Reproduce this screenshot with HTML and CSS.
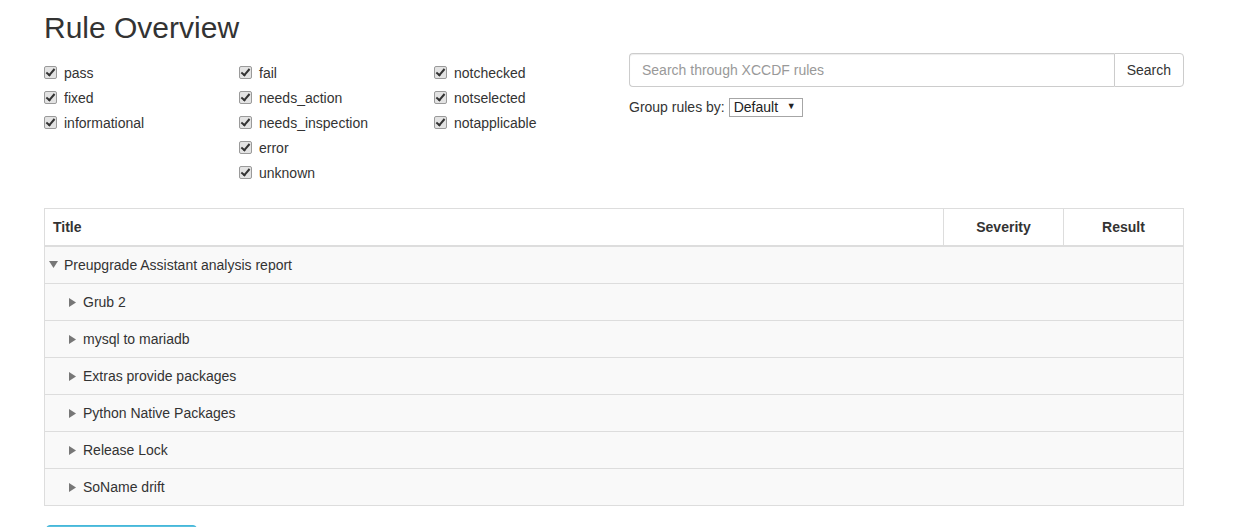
FILE: index.html
```html
<!DOCTYPE html>
<html lang="en">
<head>
    <meta charset="UTF-8">
    <meta name="viewport" content="width=device-width, initial-scale=1.0">
    <title>Rule Overview</title>
    <link rel="stylesheet" href="styles.css">
</head>
<body>
  <div class="container">
    <h2>Rule Overview</h2>

    <div class="filters">
      <div class="result-filter">
        <div class="filter-col">
          <label class="check"><input type="checkbox" checked> pass</label>
          <label class="check"><input type="checkbox" checked> fixed</label>
          <label class="check"><input type="checkbox" checked> informational</label>
        </div>
        <div class="filter-col">
          <label class="check"><input type="checkbox" checked> fail</label>
          <label class="check"><input type="checkbox" checked> needs_action</label>
          <label class="check"><input type="checkbox" checked> needs_inspection</label>
          <label class="check"><input type="checkbox" checked> error</label>
          <label class="check"><input type="checkbox" checked> unknown</label>
        </div>
        <div class="filter-col">
          <label class="check"><input type="checkbox" checked> notchecked</label>
          <label class="check"><input type="checkbox" checked> notselected</label>
          <label class="check"><input type="checkbox" checked> notapplicable</label>
        </div>
      </div>

      <div class="search-section">
        <div class="input-group">
          <input type="text" class="search-input" placeholder="Search through XCCDF rules">
          <button class="search-btn">Search</button>
        </div>
        <div class="group-by">
          Group rules by:
          <span class="select-wrap">
            <select>
              <option>Default</option>
              <option>Severity</option>
              <option>Result</option>
            </select>
          </span>
        </div>
      </div>
    </div>

    <table class="rules">
      <thead>
        <tr>
          <th class="col-title">Title</th>
          <th class="col-small">Severity</th>
          <th class="col-small">Result</th>
        </tr>
      </thead>
      <tbody>
        <tr class="group open">
          <td colspan="3"><span class="toggle"><svg width="9" height="7" viewBox="0 0 9 7"><polygon points="0,0 9,0 4.5,7" fill="#777"/></svg></span>Preupgrade Assistant analysis report</td>
        </tr>
        <tr class="group child">
          <td colspan="3"><span class="toggle"><svg width="7" height="9" viewBox="0 0 7 9"><polygon points="0,0 7,4.5 0,9" fill="#777"/></svg></span>Grub 2</td>
        </tr>
        <tr class="group child">
          <td colspan="3"><span class="toggle"><svg width="7" height="9" viewBox="0 0 7 9"><polygon points="0,0 7,4.5 0,9" fill="#777"/></svg></span>mysql to mariadb</td>
        </tr>
        <tr class="group child">
          <td colspan="3"><span class="toggle"><svg width="7" height="9" viewBox="0 0 7 9"><polygon points="0,0 7,4.5 0,9" fill="#777"/></svg></span>Extras provide packages</td>
        </tr>
        <tr class="group child">
          <td colspan="3"><span class="toggle"><svg width="7" height="9" viewBox="0 0 7 9"><polygon points="0,0 7,4.5 0,9" fill="#777"/></svg></span>Python Native Packages</td>
        </tr>
        <tr class="group child">
          <td colspan="3"><span class="toggle"><svg width="7" height="9" viewBox="0 0 7 9"><polygon points="0,0 7,4.5 0,9" fill="#777"/></svg></span>Release Lock</td>
        </tr>
        <tr class="group child">
          <td colspan="3"><span class="toggle"><svg width="7" height="9" viewBox="0 0 7 9"><polygon points="0,0 7,4.5 0,9" fill="#777"/></svg></span>SoName drift</td>
        </tr>
      </tbody>
    </table>

    <button class="btn-info">Show all details</button>
  </div>
</body>
</html>
```

FILE: styles.css
```css
html, body {
  overflow: hidden;
}
body {
  margin: 0;
  font-family: "Liberation Sans", Arial, sans-serif;
  font-size: 14px;
  line-height: 20px;
  color: #333;
  background: #fff;
}
.container {
  width: 1140px;
  margin-left: 44px;
}
h2 {
  margin: 11px 0 0;
  font-size: 30px;
  font-weight: normal;
  line-height: 33px;
}
.filters {
  display: flex;
  align-items: flex-start;
  margin-top: 9px;
}
.result-filter {
  display: flex;
  width: 585px;
  padding-top: 7px;
}
.filter-col {
  width: 195px;
  display: flex;
  flex-direction: column;
}
.check {
  display: flex;
  align-items: center;
  height: 25px;
}
.check input {
  appearance: none;
  -webkit-appearance: none;
  position: relative;
  width: 13px;
  height: 13px;
  margin: 0 7px 0 0;
  border: 1px solid #9a9a9a;
  border-radius: 2px;
  background: #e3e3e3;
}
.check input:checked::after {
  content: "";
  position: absolute;
  left: 3px;
  top: 0px;
  width: 3px;
  height: 7px;
  border: solid #333;
  border-width: 0 2px 2px 0;
  transform: rotate(40deg);
}
.search-section {
  width: 555px;
}
.input-group {
  display: flex;
  height: 34px;
}
.search-input {
  flex: 1;
  box-sizing: border-box;
  height: 34px;
  padding: 6px 12px;
  font-family: inherit;
  font-size: 14px;
  color: #555;
  border: 1px solid #ccc;
  border-right: none;
  border-radius: 4px 0 0 4px;
  box-shadow: inset 0 1px 1px rgba(0, 0, 0, 0.075);
  outline: none;
}
.search-input::placeholder {
  color: #999;
}
.search-btn {
  box-sizing: border-box;
  height: 34px;
  padding: 6px 12px;
  font-family: inherit;
  font-size: 14px;
  color: #333;
  background: #fff;
  border: 1px solid #ccc;
  border-radius: 0 4px 4px 0;
}
.group-by {
  margin-top: 10px;
  display: flex;
  align-items: center;
  gap: 4px;
}
.select-wrap {
  position: relative;
  display: inline-block;
}
.select-wrap::after {
  content: "\25BC";
  position: absolute;
  right: 7px;
  top: 4px;
  font-size: 9px;
  line-height: 11px;
  color: #222;
  pointer-events: none;
}
.select-wrap select {
  appearance: none;
  -webkit-appearance: none;
  box-sizing: border-box;
  width: 74px;
  height: 19px;
  padding: 0 0 0 4px;
  font-family: inherit;
  font-size: 14px;
  line-height: 17px;
  color: #222;
  background: #fff;
  border: 1px solid #a6a6a6;
  border-radius: 0;
}
table.rules {
  width: 100%;
  margin-top: 23px;
  border-collapse: collapse;
  border: 1px solid #ddd;
}
.rules th, .rules td {
  padding: 8px;
  line-height: 20px;
  border: 1px solid #ddd;
  text-align: left;
}
.rules th {
  font-weight: bold;
  border-bottom: 2px solid #ddd;
}
.rules th.col-small {
  width: 103px;
  text-align: center;
}
.rules tbody tr {
  background: #f9f9f9;
}
.rules tr.open td {
  padding-left: 4px;
}
.rules tr.child td {
  padding-left: 24px;
}
.toggle {
  display: inline-block;
  width: 15px;
}
.child .toggle {
  width: 14px;
}
.open .toggle svg {
  vertical-align: 2px;
}
.child .toggle svg {
  vertical-align: 0px;
}
.btn-info {
  display: block;
  box-sizing: border-box;
  width: 151px;
  height: 34px;
  margin: 19px 0 0 2px;
  padding: 8px 12px 6px;
  font-family: inherit;
  font-size: 14px;
  line-height: 20px;
  color: #fff;
  background: #5bc0de;
  border: 1px solid #46b8da;
  border-radius: 4px;
}
```
